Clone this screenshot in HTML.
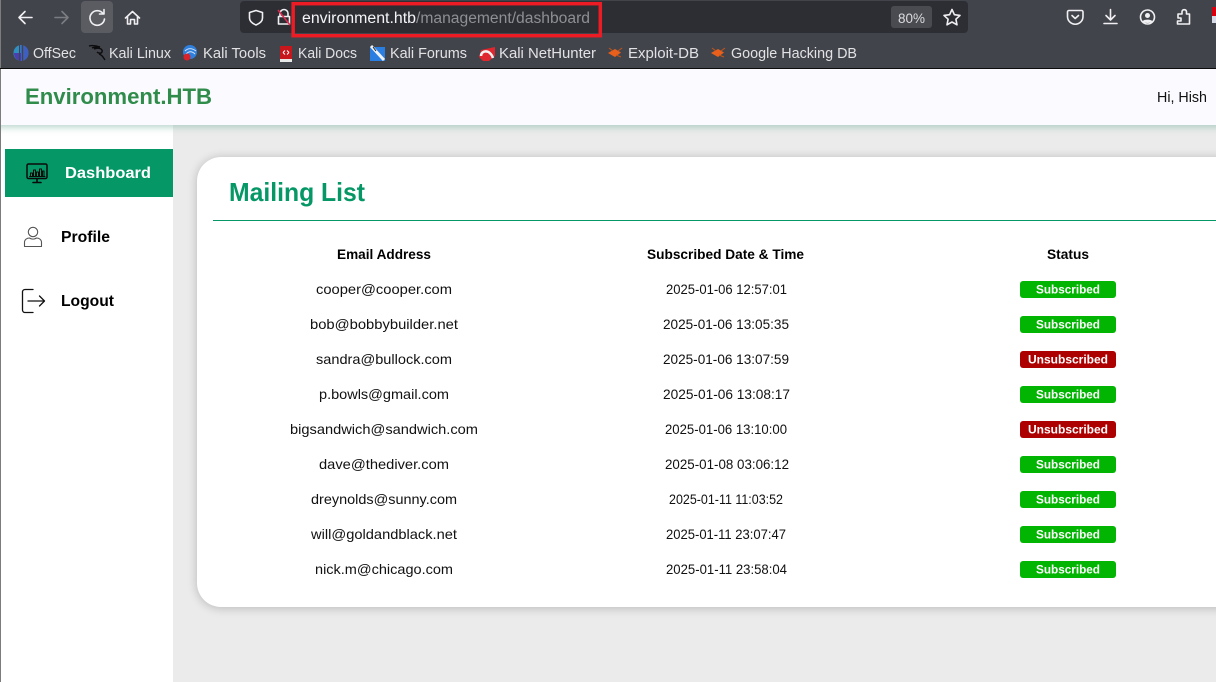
<!DOCTYPE html>
<html><head><meta charset="utf-8"><title>Environment.HTB</title>
<style>
html,body{margin:0;padding:0;width:1216px;height:682px;overflow:hidden;background:#ebebeb}
svg{display:block;position:absolute;left:0;top:0}
text{font-family:"Liberation Sans",sans-serif}
.ui{font-size:15px;fill:#e2e2e4}
.em{font-size:14px;fill:#111}
.hd{font-size:13.5px;font-weight:bold;fill:#000}
.bd{font-size:11.5px;font-weight:bold;fill:#fff}
.sb{font-size:16px;font-weight:bold;fill:#000}
.ic{fill:none;stroke:#f0f0f2;stroke-width:1.6;stroke-linecap:round;stroke-linejoin:round}
</style></head><body>
<svg width="1216" height="682" viewBox="0 0 1216 682" xmlns="http://www.w3.org/2000/svg">
<defs>
<filter id="hs" x="-5%" y="-100%" width="110%" height="300%"><feGaussianBlur stdDeviation="4"/></filter>
<filter id="cs" x="-10%" y="-10%" width="120%" height="120%"><feGaussianBlur stdDeviation="5"/></filter>
</defs>

<!-- page -->
<rect x="0" y="69" width="1216" height="613" fill="#ebebeb"/>
<rect x="1" y="125" width="172" height="557" fill="#fff"/>
<rect x="-10" y="117" width="1240" height="10" fill="#7fb5a2" opacity=".6" filter="url(#hs)"/>
<rect x="0" y="69" width="1216" height="56" fill="#fbfaff"/>
<rect x="0" y="0" width="1" height="682" fill="#7c7c7c"/>

<!-- browser chrome -->
<rect x="1" y="0" width="1215" height="68" fill="#42444c"/>
<rect x="0" y="68" width="1216" height="1" fill="#0c0c0d"/>
<rect x="240" y="1" width="728" height="32" rx="4" fill="#2d2e34"/>
<rect x="81" y="1" width="32" height="32" rx="4" fill="#5b5c62"/>

<path class="ic" d="M19 17.500H32M19 17.500L25 11.500M19 17.500L25 23.500"/>
<path class="ic" style="stroke:#7b7c82" d="M55 17.500H68M68 17.500L62 11.500M68 17.500L62 23.500"/>
<path class="ic" d="M103 13.500A7.300 7.300 0 1 0 104.500 19M104 9.500V14H99.500"/>
<path class="ic" d="M125.500 18L132.500 11.500L139.500 18M127.500 16.500V24H130.500V19.500H134.500V24H137.500V16.500"/>
<path class="ic" d="M256 10.500L262.500 12.500V18C262.500 21.500 259.500 23.500 256 25C252.500 23.500 249.500 21.500 249.500 18V12.500Z"/>
<path class="ic" d="M280 16V13.500A4 4 0 0 1 288 13.500V16M278.500 16.500H289.500V24H278.500Z"/>
<path d="M278 10L290 25" stroke="#e22850" stroke-width="1.500" fill="none"/>

<text x="302" y="23" font-size="15.500" fill="#f4f4f6" textLength="114" lengthAdjust="spacingAndGlyphs">environment.htb</text>
<text x="416" y="23" font-size="15.500" fill="#8e8f95" textLength="174" lengthAdjust="spacingAndGlyphs">/management/dashboard</text>
<rect x="293.200" y="3.700" width="307.100" height="32" fill="none" stroke="#ed1c24" stroke-width="3.500"/>

<rect x="891" y="6" width="41" height="22" rx="3" fill="#4a4b51"/>
<text x="898" y="23" font-size="13.500" fill="#dcdcde" textLength="27" lengthAdjust="spacingAndGlyphs">80%</text>
<path class="ic" d="M952 9.500L954.400 14.700L960 15.400L955.900 19.200L957 24.800L952 22L947 24.800L948.100 19.200L944 15.400L949.600 14.700Z"/>

<path class="ic" d="M1069 10.500H1081.500A1.500 1.500 0 0 1 1083 12V16.500A7.700 7.700 0 0 1 1067.500 16.500V12A1.500 1.500 0 0 1 1069 10.500ZM1072 15.500L1075.200 18.500L1078.500 15.500"/>
<path class="ic" d="M1110.500 9.500V19.500M1106 15.500L1110.500 20L1115 15.500M1104 23.500H1117"/>
<circle class="ic" cx="1147.500" cy="17" r="7"/>
<circle cx="1147.500" cy="15.500" r="2.500" fill="#f0f0f2"/>
<path d="M1142.500 21.500C1143.500 19 1151.500 19 1152.500 21.500C1150.500 23.500 1144.500 23.500 1142.500 21.500Z" fill="#f0f0f2"/>
<path class="ic" d="M1178 14H1182V11.500A2.300 2.300 0 0 1 1186.500 11.500V14H1189.500V24H1177.500V21H1181V18H1178Z"/>
<rect x="1212" y="7" width="4" height="9" fill="#d8000c"/>
<rect x="1212" y="16" width="4" height="7" fill="#d8dce8"/>

<!-- bookmarks -->
<ellipse cx="21" cy="53" rx="7.500" ry="8" fill="#2f8fc0"/>
<path d="M21 45A7.500 8 0 0 1 28.500 53A7.500 8 0 0 1 21 61Z" fill="#3f5fc0"/>
<path d="M14 53A7 8 0 0 0 21 61V53Z" fill="#4a3fb0"/>
<rect x="19" y="45" width="1.200" height="16" fill="#42444c"/>
<rect x="22" y="45" width="1.200" height="16" fill="#42444c"/>
<path d="M89 46C93 45 97 46 100 47C96 47 94 47 92 48M94 49C99 47 103 49 102 52C101 54 98 53 97 52M99 54C102 55 103 57 105 60" fill="none" stroke="#0c0c0d" stroke-width="1.400"/>
<circle cx="190" cy="52" r="7" fill="#2f7fdc"/>
<path d="M185 51C188 48 192 48 196 51M186 54C189 51 192 51 195 54" fill="none" stroke="#dbe8f7" stroke-width="1"/>
<circle cx="187" cy="57" r="3.500" fill="#d8232a"/>
<rect x="280" y="46" width="12" height="13" fill="#c8161d"/>
<rect x="280" y="59" width="12" height="3" fill="#e8e8e8"/>
<path d="M283 52.500L285 50.500M283 52.500L285 54.500M289 52.500L287 50.500M289 52.500L287 54.500" stroke="#fff" stroke-width="1" fill="none"/>
<rect x="370" y="47" width="15" height="14" fill="#2a7de1"/>
<path d="M371 46L384 60" stroke="#eef2f6" stroke-width="3"/>
<path d="M373 47L376 51" stroke="#222" stroke-width="1"/>
<path d="M481 50L495 47V56L489 61H483L479 57Z" fill="#e0262e"/>
<path d="M481 56C481 50 490 49 493 58" fill="none" stroke="#f2f2f2" stroke-width="2.500"/>
<path d="M608 53L615 49L621 52.500L615 57Z" fill="#e8601c"/>
<path d="M609 48L613 51M621 57L616 55M622 48L618 51" stroke="#c65414" stroke-width="1"/>
<path d="M711 53L718 49L724 52.500L718 57Z" fill="#e8601c"/>
<path d="M712 48L716 51M724 57L719 55M725 48L721 51" stroke="#c65414" stroke-width="1"/>

<g class="ui">
<text class="ui" x="33" y="58" textLength="43" lengthAdjust="spacingAndGlyphs">OffSec</text>
<text class="ui" x="109" y="58" textLength="62" lengthAdjust="spacingAndGlyphs">Kali Linux</text>
<text class="ui" x="203" y="58" textLength="63" lengthAdjust="spacingAndGlyphs">Kali Tools</text>
<text class="ui" x="298" y="58" textLength="59" lengthAdjust="spacingAndGlyphs">Kali Docs</text>
<text class="ui" x="390" y="58" textLength="77" lengthAdjust="spacingAndGlyphs">Kali Forums</text>
<text class="ui" x="499" y="58" textLength="97" lengthAdjust="spacingAndGlyphs">Kali NetHunter</text>
<text class="ui" x="628" y="58" textLength="71" lengthAdjust="spacingAndGlyphs">Exploit-DB</text>
<text class="ui" x="731" y="58" textLength="126" lengthAdjust="spacingAndGlyphs">Google Hacking DB</text>
</g>

<!-- header text -->
<text x="25" y="104" font-size="22" font-weight="bold" fill="#2f8c4a" textLength="187" lengthAdjust="spacingAndGlyphs">Environment.HTB</text>
<text x="1157" y="102" font-size="15" fill="#111" textLength="50" lengthAdjust="spacingAndGlyphs">Hi, Hish</text>

<!-- sidebar -->
<rect x="5" y="149" width="168" height="48" fill="#069767"/>
<text x="65" y="178" font-size="16" font-weight="bold" fill="#fff" textLength="86" lengthAdjust="spacingAndGlyphs">Dashboard</text>
<text class="sb" x="61" y="242" textLength="49" lengthAdjust="spacingAndGlyphs">Profile</text>
<text class="sb" x="61" y="306" textLength="53" lengthAdjust="spacingAndGlyphs">Logout</text>
<g fill="none" stroke="#0a0a0a" stroke-linecap="round" stroke-linejoin="round">
<rect x="27" y="164" width="20" height="14.500" rx="1.500" stroke-width="1.500"/>
<path d="M37 179V182M33 182.500H41" stroke-width="1.600"/>
<path d="M30.500 176V173H32.500V176M33.500 176V170H35.500V176M36.500 176V172H38.500V176M39.500 176V169H41.500V176M42.500 176V171H44V176M29.500 176.500H45" stroke-width="1"/>
</g>
<g fill="none" stroke="#555" stroke-width="1.100" stroke-linejoin="round">
<circle cx="33" cy="232" r="4.700"/>
<path d="M24.500 246.500V242.500C24.500 239.500 27 238 29.500 238C31.500 239.500 34.500 239.500 36.500 238C39 238 41.500 239.500 41.500 242.500V246.500Z"/>
</g>
<g fill="none" stroke="#111" stroke-width="1.300" stroke-linecap="round" stroke-linejoin="round">
<path d="M33 289.500H25A2.500 2.500 0 0 0 22.500 292V310A2.500 2.500 0 0 0 25 312.500H33"/>
<path d="M28 301H44M39.500 296L44.500 301L39.500 306"/>
</g>

<!-- card -->
<rect x="197" y="158" width="1060" height="450" rx="24" fill="#000" opacity=".22" filter="url(#cs)"/>
<rect x="197" y="157" width="1060" height="450" rx="24" fill="#fff"/>
<text x="229" y="201" font-size="26" font-weight="bold" fill="#069767" textLength="136" lengthAdjust="spacingAndGlyphs">Mailing List</text>
<rect x="213" y="220" width="1003" height="1" fill="#069767"/>

<!-- table head -->
<text class="hd" x="337" y="259" textLength="94" lengthAdjust="spacingAndGlyphs">Email Address</text>
<text class="hd" x="647" y="259" textLength="157" lengthAdjust="spacingAndGlyphs">Subscribed Date &amp; Time</text>
<text class="hd" x="1047" y="259" textLength="42" lengthAdjust="spacingAndGlyphs">Status</text>

<!-- rows -->
<text class="em" x="316" y="294" textLength="136" lengthAdjust="spacingAndGlyphs">cooper@cooper.com</text>
<text class="em" x="666" y="294" textLength="121" lengthAdjust="spacingAndGlyphs">2025-01-06 12:57:01</text>
<rect x="1020" y="281" width="96" height="17" rx="3" fill="#02b502"/>
<text class="bd" x="1036" y="293.500" textLength="64" lengthAdjust="spacingAndGlyphs">Subscribed</text>

<text class="em" x="310" y="329" textLength="148" lengthAdjust="spacingAndGlyphs">bob@bobbybuilder.net</text>
<text class="em" x="663" y="329" textLength="126" lengthAdjust="spacingAndGlyphs">2025-01-06 13:05:35</text>
<rect x="1020" y="316" width="96" height="17" rx="3" fill="#02b502"/>
<text class="bd" x="1036" y="328.500" textLength="64" lengthAdjust="spacingAndGlyphs">Subscribed</text>

<text class="em" x="316" y="364" textLength="136" lengthAdjust="spacingAndGlyphs">sandra@bullock.com</text>
<text class="em" x="663" y="364" textLength="126" lengthAdjust="spacingAndGlyphs">2025-01-06 13:07:59</text>
<rect x="1020" y="351" width="96" height="17" rx="3" fill="#ad0000"/>
<text class="bd" x="1028" y="363.500" textLength="80" lengthAdjust="spacingAndGlyphs">Unsubscribed</text>

<text class="em" x="319" y="399" textLength="130" lengthAdjust="spacingAndGlyphs">p.bowls@gmail.com</text>
<text class="em" x="663" y="399" textLength="127" lengthAdjust="spacingAndGlyphs">2025-01-06 13:08:17</text>
<rect x="1020" y="386" width="96" height="17" rx="3" fill="#02b502"/>
<text class="bd" x="1036" y="398.500" textLength="64" lengthAdjust="spacingAndGlyphs">Subscribed</text>

<text class="em" x="290" y="434" textLength="188" lengthAdjust="spacingAndGlyphs">bigsandwich@sandwich.com</text>
<text class="em" x="665" y="434" textLength="122" lengthAdjust="spacingAndGlyphs">2025-01-06 13:10:00</text>
<rect x="1020" y="421" width="96" height="17" rx="3" fill="#ad0000"/>
<text class="bd" x="1028" y="433.500" textLength="80" lengthAdjust="spacingAndGlyphs">Unsubscribed</text>

<text class="em" x="319" y="469" textLength="130" lengthAdjust="spacingAndGlyphs">dave@thediver.com</text>
<text class="em" x="665" y="469" textLength="124" lengthAdjust="spacingAndGlyphs">2025-01-08 03:06:12</text>
<rect x="1020" y="456" width="96" height="17" rx="3" fill="#02b502"/>
<text class="bd" x="1036" y="468.500" textLength="64" lengthAdjust="spacingAndGlyphs">Subscribed</text>

<text class="em" x="311" y="504" textLength="146" lengthAdjust="spacingAndGlyphs">dreynolds@sunny.com</text>
<text class="em" x="669" y="504" textLength="114" lengthAdjust="spacingAndGlyphs">2025-01-11 11:03:52</text>
<rect x="1020" y="491" width="96" height="17" rx="3" fill="#02b502"/>
<text class="bd" x="1036" y="503.500" textLength="64" lengthAdjust="spacingAndGlyphs">Subscribed</text>

<text class="em" x="311" y="539" textLength="146" lengthAdjust="spacingAndGlyphs">will@goldandblack.net</text>
<text class="em" x="666" y="539" textLength="120" lengthAdjust="spacingAndGlyphs">2025-01-11 23:07:47</text>
<rect x="1020" y="526" width="96" height="17" rx="3" fill="#02b502"/>
<text class="bd" x="1036" y="538.500" textLength="64" lengthAdjust="spacingAndGlyphs">Subscribed</text>

<text class="em" x="315" y="574" textLength="138" lengthAdjust="spacingAndGlyphs">nick.m@chicago.com</text>
<text class="em" x="666" y="574" textLength="121" lengthAdjust="spacingAndGlyphs">2025-01-11 23:58:04</text>
<rect x="1020" y="561" width="96" height="17" rx="3" fill="#02b502"/>
<text class="bd" x="1036" y="573.500" textLength="64" lengthAdjust="spacingAndGlyphs">Subscribed</text>
</svg>
</body></html>
